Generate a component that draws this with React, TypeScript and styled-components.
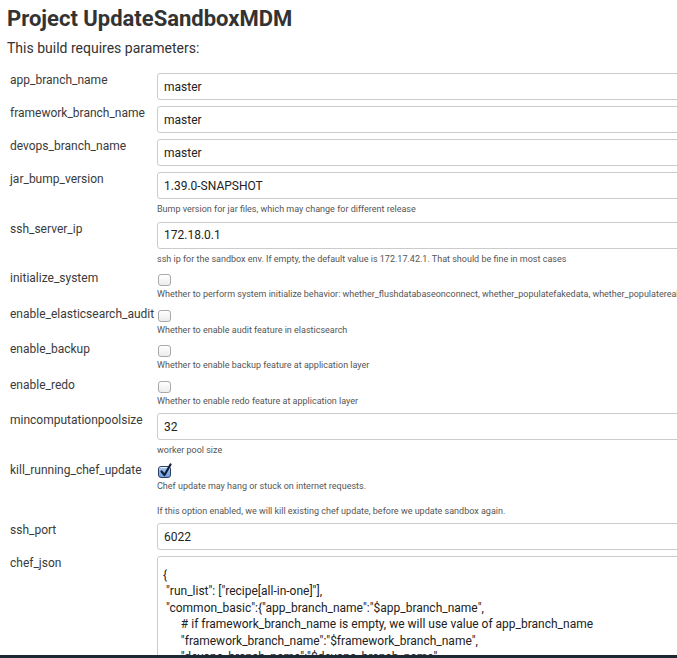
import React from 'react';
import styled, { createGlobalStyle } from 'styled-components';

const GlobalStyle = createGlobalStyle`
  html, body {
    margin: 0;
    padding: 0;
    background: #fff;
    overflow: hidden;
  }
  body {
    font-family: Roboto, "Liberation Sans", Arial, sans-serif;
    color: #333;
  }
`;

type Param = {
    name: string;
    kind: 'text' | 'bool' | 'area';
    value?: string;
    checked?: boolean;
    desc?: string[];
};

const params: Param[] = [
    { name: 'app_branch_name', kind: 'text', value: 'master' },
    { name: 'framework_branch_name', kind: 'text', value: 'master' },
    { name: 'devops_branch_name', kind: 'text', value: 'master' },
    { name: 'jar_bump_version', kind: 'text', value: '1.39.0-SNAPSHOT', desc: ['Bump version for jar files, which may change for different release'] },
    { name: 'ssh_server_ip', kind: 'text', value: '172.18.0.1', desc: ['ssh ip for the sandbox env. If empty, the default value is 172.17.42.1. That should be fine in most cases'] },
    { name: 'initialize_system', kind: 'bool', checked: false, desc: ['Whether to perform system initialize behavior: whether_flushdatabaseonconnect, whether_populatefakedata, whether_populaterealdata'] },
    { name: 'enable_elasticsearch_audit', kind: 'bool', checked: false, desc: ['Whether to enable audit feature in elasticsearch'] },
    { name: 'enable_backup', kind: 'bool', checked: false, desc: ['Whether to enable backup feature at application layer'] },
    { name: 'enable_redo', kind: 'bool', checked: false, desc: ['Whether to enable redo feature at application layer'] },
    { name: 'mincomputationpoolsize', kind: 'text', value: '32', desc: ['worker pool size'] },
    { name: 'kill_running_chef_update', kind: 'bool', checked: true, desc: ['Chef update may hang or stuck on internet requests.', 'If this option enabled, we will kill existing chef update, before we update sandbox again.'] },
    { name: 'ssh_port', kind: 'text', value: '6022' },
    { name: 'chef_json', kind: 'area' },
];

const chefJson = `{
 "run_list": ["recipe[all-in-one]"],
 "common_basic":{"app_branch_name":"$app_branch_name",
      # if framework_branch_name is empty, we will use value of app_branch_name
      "framework_branch_name":"$framework_branch_name",
      "devops_branch_name":"$devops_branch_name",
      "jar_bump_version":"$jar_bump_version",
`;

const Page = styled.div`
  padding: 5px 0 0 7px;
  width: 1000px;
`;

const Title = styled.h1`
  margin: 0;
  font-size: 22px;
  line-height: 27px;
  font-weight: 700;
  color: #333;
`;

const Intro = styled.div`
  margin-top: 8px;
  font-size: 14px;
  line-height: 16px;
  color: #333;
`;

const Form = styled.div`
  margin: 17px 0 0 3px;
  display: grid;
  grid-template-columns: 147px 760px;
  row-gap: 6px;
`;

const Label = styled.div`
  font-size: 12px;
  line-height: 15px;
  white-space: nowrap;
  color: #3a3a3a;
`;

const Field = styled.div`
  display: flex;
  flex-direction: column;
  align-items: flex-start;
`;

const TextBox = styled.input`
  box-sizing: border-box;
  width: 100%;
  height: 27px;
  margin: 0;
  padding: 0 6px;
  border: 1px solid #cbcbcb;
  border-radius: 3px;
  font-family: Roboto, "Liberation Sans", Arial, sans-serif;
  font-size: 12px;
  color: #222;
  background: #fff;
  outline: none;
`;

const Area = styled.textarea`
  box-sizing: border-box;
  width: 100%;
  height: 220px;
  margin: 0;
  padding: 10px 5px 7px;
  border: 1px solid #cbcbcb;
  border-radius: 3px;
  font-family: Roboto, "Liberation Sans", Arial, sans-serif;
  font-size: 12px;
  line-height: 16.4px;
  color: #222;
  white-space: pre;
  resize: none;
  overflow: hidden;
  outline: none;
`;

const Box = styled.span<{ $checked: boolean }>`
  position: relative;
  display: block;
  box-sizing: border-box;
  width: 13px;
  height: 12px;
  margin: 3px 0 0 1px;
  border: 1px solid ${p => (p.$checked ? '#2b3f66' : '#a9a9a9')};
  border-radius: 3px;
  background: ${p => (p.$checked
        ? 'linear-gradient(#a9c8f0, #6f9ee0)'
        : 'linear-gradient(#ffffff, #ececec)')};
  box-shadow: inset 0 1px 0 rgba(255, 255, 255, 0.8);
`;

const Tick = styled.svg`
  position: absolute;
  left: 0px;
  top: -4px;
  width: 13px;
  height: 15px;
`;

const Desc = styled.div<{ $gap: number }>`
  margin-top: ${p => p.$gap}px;
  font-size: 9px;
  line-height: 12.5px;
  color: #555;
  white-space: nowrap;

  p {
    margin: 0;
  }
  p + p {
    margin-top: 12.5px;
  }
`;

const BottomEdge = styled.div`
  position: fixed;
  left: 0;
  right: 0;
  bottom: 0;
  height: 3px;
  background: #1e2833;
`;

const CheckBox = ({ checked }: { checked: boolean }) => (
    <Box $checked={checked}>
        {checked ? (
            <Tick viewBox="0 0 13 15">
                <path d="M2.5 8.5 L5.5 12 L11.5 1.5" fill="none" stroke="#13203a" strokeWidth="2.2" strokeLinecap="round" strokeLinejoin="round" />
            </Tick>
        ) : null}
    </Box>
);

const ParamRow = ({ param }: { param: Param }) => {
    let control;
    if (param.kind === 'bool') control = <CheckBox checked={!!param.checked} />;
    else if (param.kind === 'area') control = <Area defaultValue={chefJson} spellCheck={false} />;
    else control = <TextBox defaultValue={param.value} />;

    return (
        <>
            <Label>{param.name}</Label>
            <Field>
                {control}
                {param.desc ? (
                    <Desc $gap={param.kind === 'bool' ? 2 : 4}>
                        {param.desc.map((d, i) => <p key={i}>{d}</p>)}
                    </Desc>
                ) : null}
            </Field>
        </>
    );
};

export default function App() {
    return (
        <>
            <GlobalStyle />
            <Page>
                <Title>Project UpdateSandboxMDM</Title>
                <Intro>This build requires parameters:</Intro>
                <Form>
                    {params.map(p => <ParamRow key={p.name} param={p} />)}
                </Form>
            </Page>
            <BottomEdge />
        </>
    );
}
